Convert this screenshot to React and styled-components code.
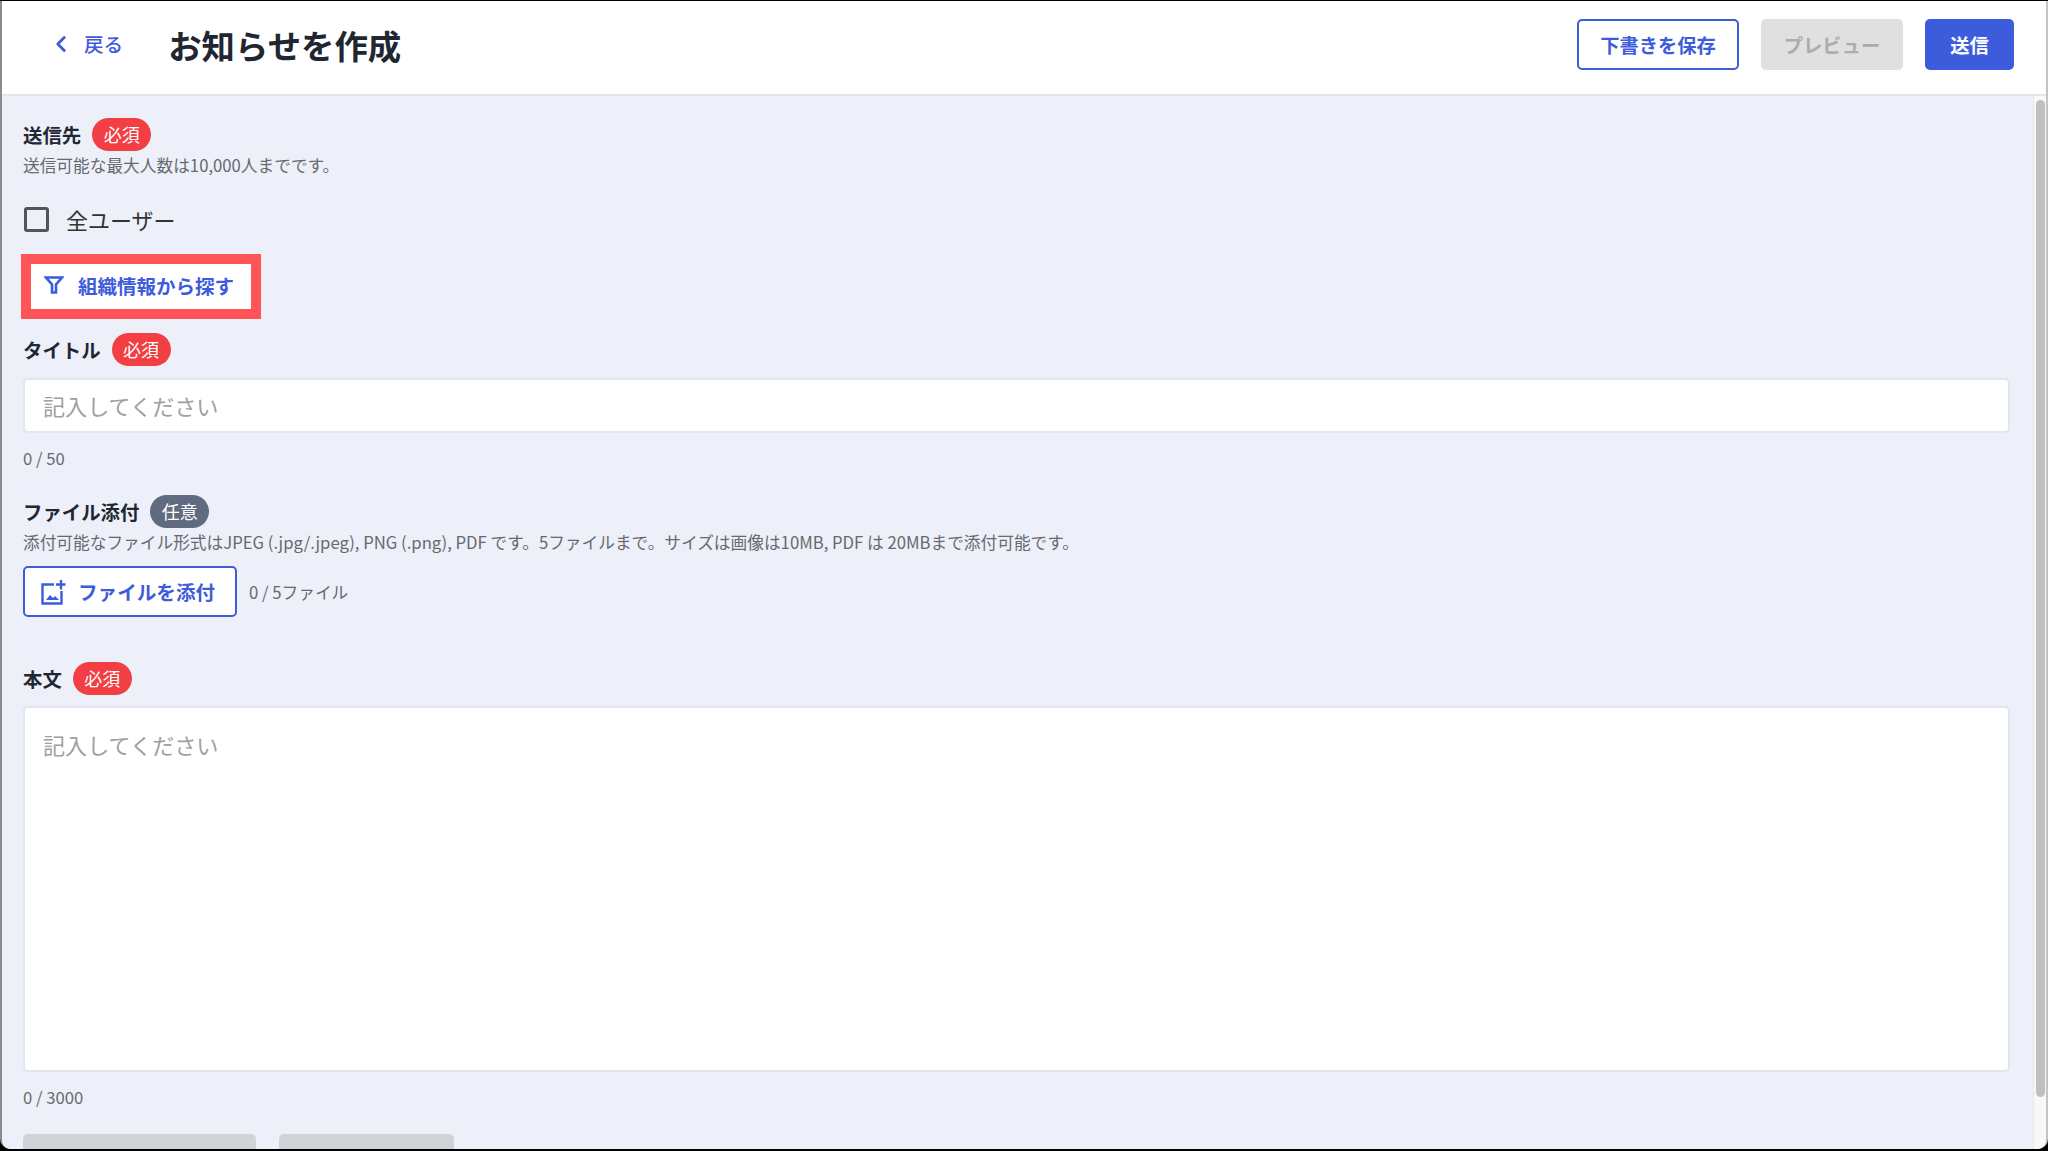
import React from "react";
import styled, { createGlobalStyle } from "styled-components";
import { ChevronLeft } from "lucide-react";

const GlobalStyle = createGlobalStyle`
    html, body {
        margin: 0;
        padding: 0;
        background: #000;
        overflow: hidden;
    }
    * {
        box-sizing: border-box;
    }
    body, input, textarea, button {
        font-family: "Noto Sans CJK JP", "Noto Sans", sans-serif;
    }
`;

const BLUE = "#3d5cdb";

const Page = styled.div`
    height: 1151px;
    padding: 1px 0 2px;
    background: #000;
`;

const Frame = styled.div`
    height: 100%;
    display: flex;
    flex-direction: column;
    background: #fff;
    border-left: 2px solid #8c8c8c;
    border-right: 2px solid #c4c4c4;
    border-radius: 0 0 10px 10px;
    overflow: hidden;
`;

const Header = styled.header`
    flex: none;
    height: 95px;
    display: flex;
    align-items: center;
    padding: 0 32px 6px 46px;
    background: #fff;
    border-bottom: 2px solid #e3e6ee;
`;

const BackLink = styled.a`
    display: flex;
    align-items: center;
    gap: 10px;
    padding-bottom: 1px;
    color: ${BLUE};
    font-size: 19.6px;
    font-weight: 500;
    line-height: 28px;
`;

const PageTitle = styled.h1`
    margin: 0 0 0 45px;
    color: #212732;
    font-size: 33.4px;
    font-weight: 700;
    line-height: 48px;
`;

const HeaderActions = styled.div`
    margin-left: auto;
    display: flex;
    gap: 22px;
`;

const HeaderButton = styled.button`
    height: 51px;
    width: ${props => props.width}px;
    padding: 0;
    border-radius: 5px;
    border: 2px solid ${props => (props.variant === "disabled" ? "#e0e0e0" : BLUE)};
    background: ${props =>
        props.variant === "primary" ? BLUE : props.variant === "disabled" ? "#e0e0e0" : "#fff"};
    color: ${props =>
        props.variant === "primary" ? "#fff" : props.variant === "disabled" ? "#acacac" : BLUE};
    font-size: 19.3px;
    font-weight: 700;
`;

const Content = styled.div`
    flex: 1;
    min-height: 0;
    display: flex;
`;

const Main = styled.main`
    flex: 1;
    min-width: 0;
    padding: 22px 23px 24px 21px;
    background: #edf0f8;
    overflow: hidden;
`;

// the shot has a real scrollbar, headless chrome hides those so it is drawn here
const ScrollTrack = styled.div`
    flex: none;
    width: 13px;
    padding: 4px 1px 0 2px;
    background: #f8f8f8;
    border-left: 1px solid #e8e8e8;
`;

const ScrollThumb = styled.div`
    height: 997px;
    border-radius: 5px;
    background: #c0c0c0;
`;

const LabelRow = styled.div`
    display: flex;
    align-items: center;
    gap: 11px;
    height: 33px;
    margin-top: ${props => props.top || 0}px;
`;

const Label = styled.span`
    padding-bottom: 1px;
    color: #212732;
    font-size: 19.4px;
    font-weight: 700;
`;

const Badge = styled.span`
    width: 59px;
    height: 33px;
    padding-bottom: 1px;
    display: flex;
    align-items: center;
    justify-content: center;
    border-radius: 17px;
    background: ${props => (props.optional ? "#5f6b80" : "#f33f43")};
    color: #fff;
    font-size: 18px;
    line-height: 1;
`;

const Hint = styled.p`
    margin: 2px 0 0;
    color: #666a70;
    font-size: 16.7px;
    line-height: 24px;
`;

const CheckRow = styled.label`
    display: flex;
    align-items: center;
    gap: 17px;
    height: 25px;
    margin: 30px 0 0 1px;
    line-height: 23px;
    color: #333;
    font-size: 22px;
`;

const CheckBox = styled.input`
    appearance: none;
    flex: none;
    width: 25px;
    height: 25px;
    margin: 0;
    border: 3px solid #555;
    border-radius: 3px;
    background: transparent;
`;

const Highlight = styled.div`
    width: 240px;
    height: 65px;
    margin: 22px 0 14px -2px;
    padding: 0 0 3px 13px;
    border: 10px solid #fe5357;
    background: #fff;
    display: flex;
    align-items: center;
    gap: 14px;
    color: ${BLUE};
    font-size: 19.5px;
    font-weight: 700;
`;

const TextInput = styled.input`
    display: block;
    width: 100%;
    height: 55px;
    margin-top: 12px;
    padding: 0 18px 2px;
    border: 2px solid #e2e6ee;
    border-radius: 5px;
    background: #fff;
    font-size: 22.1px;
    outline: none;

    &::placeholder {
        color: #a0a0a0;
    }
`;

const TextArea = styled.textarea`
    display: block;
    width: 100%;
    height: 366px;
    margin-top: 11px;
    padding: 19px 18px;
    border: 2px solid #e2e6ee;
    border-radius: 5px;
    background: #fff;
    font-size: 22.1px;
    line-height: 34px;
    outline: none;
    resize: none;

    &::placeholder {
        color: #a0a0a0;
    }
`;

const Counter = styled.div`
    margin-top: 13px;
    color: #666a70;
    font-size: 16.7px;
    line-height: 24px;
`;

const AttachRow = styled.div`
    display: flex;
    align-items: center;
    gap: 12px;
    margin-top: 12px;
`;

const AttachButton = styled.button`
    width: 214px;
    height: 51px;
    display: flex;
    align-items: center;
    gap: 12px;
    padding: 0 0 0 15px;
    border: 2px solid ${BLUE};
    border-radius: 5px;
    background: #fff;
    color: ${BLUE};
    font-size: 19.6px;
    font-weight: 700;
`;

const AttachCount = styled.span`
    color: #666a70;
    font-size: 16.7px;
`;

const BottomActions = styled.div`
    display: flex;
    gap: 23px;
    margin-top: 25px;
`;

const BottomButton = styled.button`
    width: ${props => props.width}px;
    height: 51px;
    padding: 13px 0 0 30px;
    border: 0;
    border-radius: 5px;
    background: #d0d3d8;
    text-align: left;
`;

const FilterIcon = () => (
    <svg width="20" height="20" viewBox="0 0 20 20" fill="none" stroke={BLUE} strokeWidth="2.6">
        <path d="M2 2.500h16l-6 7v8h-4v-8z" />
    </svg>
);

const AddImageIcon = () => (
    <svg width="26" height="26" viewBox="0 0 26 26" fill="none" stroke={BLUE} strokeWidth="2.4">
        <path d="M14 5.500H2.500v19h19V12" />
        <path d="M21 1v9.500M16 5.500h9.500" />
        <path d="M6 21l4-5 3 3 2-2 4 4z" fill={BLUE} stroke="none" />
    </svg>
);

const PeekIcon = () => (
    <svg width="16" height="16" viewBox="0 0 16 16" fill="#8f9298">
        <path d="M8 1l3 6H5z" />
    </svg>
);

export default function App() {
    return (
        <Page>
            <GlobalStyle />
            <Frame>
                <Header>
                    <BackLink>
                        <ChevronLeft size={26} strokeWidth={2.6} />
                        戻る
                    </BackLink>
                    <PageTitle>お知らせを作成</PageTitle>
                    <HeaderActions>
                        <HeaderButton width={162}>下書きを保存</HeaderButton>
                        <HeaderButton width={142} variant="disabled">プレビュー</HeaderButton>
                        <HeaderButton width={89} variant="primary">送信</HeaderButton>
                    </HeaderActions>
                </Header>
                <Content>
                    <Main>
                        <LabelRow>
                            <Label>送信先</Label>
                            <Badge>必須</Badge>
                        </LabelRow>
                        <Hint>送信可能な最大人数は10,000人までです。</Hint>
                        <CheckRow>
                            <CheckBox type="checkbox" />
                            全ユーザー
                        </CheckRow>
                        <Highlight>
                            <FilterIcon />
                            組織情報から探す
                        </Highlight>

                        <LabelRow>
                            <Label>タイトル</Label>
                            <Badge>必須</Badge>
                        </LabelRow>
                        <TextInput placeholder="記入してください" />
                        <Counter>0 / 50</Counter>

                        <LabelRow top={25}>
                            <Label>ファイル添付</Label>
                            <Badge optional>任意</Badge>
                        </LabelRow>
                        <Hint>添付可能なファイル形式はJPEG (.jpg/.jpeg), PNG (.png), PDF です。5ファイルまで。サイズは画像は10MB, PDF は 20MBまで添付可能です。</Hint>
                        <AttachRow>
                            <AttachButton>
                                <AddImageIcon />
                                ファイルを添付
                            </AttachButton>
                            <AttachCount>0 / 5ファイル</AttachCount>
                        </AttachRow>

                        <LabelRow top={45}>
                            <Label>本文</Label>
                            <Badge>必須</Badge>
                        </LabelRow>
                        <TextArea placeholder="記入してください" />
                        <Counter>0 / 3000</Counter>

                        <BottomActions>
                            <BottomButton width={233} />
                            <BottomButton width={175}>
                                <PeekIcon />
                            </BottomButton>
                        </BottomActions>
                    </Main>
                    <ScrollTrack>
                        <ScrollThumb />
                    </ScrollTrack>
                </Content>
            </Frame>
        </Page>
    );
}
